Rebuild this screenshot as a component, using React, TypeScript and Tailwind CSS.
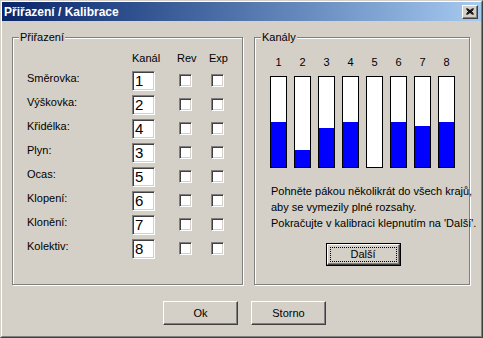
const font = { fontFamily: '"Liberation Sans", Arial, sans-serif' };

const rows = [
  { label: 'Směrovka:', ch: '1' },
  { label: 'Výškovka:', ch: '2' },
  { label: 'Křidélka:', ch: '4' },
  { label: 'Plyn:', ch: '3' },
  { label: 'Ocas:', ch: '5' },
  { label: 'Klopení:', ch: '6' },
  { label: 'Klonění:', ch: '7' },
  { label: 'Kolektiv:', ch: '8' },
];

// blue fill height in px (inner bar height is 90)
const bars = [45, 17, 39, 45, 0, 45, 41, 45];

function Checkbox() {
  return (
    <div className="w-[13px] h-[13px] bg-white border border-t-[#808080] border-l-[#808080] border-b-white border-r-white shadow-[inset_1px_1px_0_#404040,inset_-1px_-1px_0_#d4d0c8]" />
  );
}

function Button({ label, primary }: { label: string; primary?: boolean }) {
  if (primary) {
    return (
      <div className="w-[75px] h-[23px] border border-black">
        <div className="w-full h-full border border-t-white border-l-white border-b-[#404040] border-r-[#404040] shadow-[inset_-1px_-1px_0_#808080] flex items-center justify-center p-[2px]">
          <div className="w-full h-full border border-dotted border-black flex items-center justify-center text-[11px] text-black">
            {label}
          </div>
        </div>
      </div>
    );
  }
  return (
    <div className="w-[75px] h-[24px] border border-t-white border-l-white border-b-[#404040] border-r-[#404040] shadow-[inset_-1px_-1px_0_#808080] flex items-center justify-center text-[11px] text-black">
      {label}
    </div>
  );
}

export default function App() {
  return (
    <div className="w-[483px] h-[338px] bg-[#d4d0c8] border border-t-[#d4d0c8] border-l-[#d4d0c8] border-b-[#404040] border-r-[#404040] overflow-hidden" style={font}>
      <div className="w-full h-full border border-t-white border-l-white border-b-[#808080] border-r-[#808080] flex flex-col">
        {/* title bar */}
        <div className="h-[19px] flex items-center justify-between pl-[2px] pr-[3px] bg-gradient-to-r from-[#0a246a] to-[#a6caf0]">
          <span className="text-white font-bold text-[12px] leading-none">Přiřazení / Kalibrace</span>
          <div className="w-[16px] h-[14px] bg-[#d4d0c8] border border-t-white border-l-white border-b-[#404040] border-r-[#404040] shadow-[inset_-1px_-1px_0_#808080] flex items-center justify-center">
            <svg width="8" height="7" viewBox="0 0 8 7">
              <path d="M0.5 0.5 L7.5 6.5 M1.5 0.5 L7.5 5.5 M0.5 1.5 L6.5 6.5 M7.5 0.5 L0.5 6.5 M6.5 0.5 L0.5 5.5 M7.5 1.5 L1.5 6.5" stroke="black" strokeWidth="1" fill="none" />
            </svg>
          </div>
        </div>

        {/* group boxes */}
        <div className="flex pt-[16px] pl-[10px] gap-[11px]">
          {/* Přiřazení */}
          <div className="relative w-[231px] h-[248px] border border-[#808080] shadow-[1px_1px_0_#fff,inset_1px_1px_0_#fff] pl-[14px] pt-[14px]">
            <span className="absolute -top-[7px] left-[6px] px-[1px] bg-[#d4d0c8] text-[11px] leading-[13px] text-black">Přiřazení</span>
            <div className="flex text-[11px] leading-[13px] text-black">
              <div className="w-[105px]" />
              <div className="w-[45px]">Kanál</div>
              <div className="w-[32px]">Rev</div>
              <div>Exp</div>
            </div>
            <div className="mt-[6px] flex flex-col">
              {rows.map((r) => (
                <div key={r.label} className="flex items-start h-[24px]">
                  <div className="w-[105px] text-[11px] leading-[13px] pt-[1px] text-black">{r.label}</div>
                  <div className="w-[23px] h-[20px] bg-white border border-t-[#808080] border-l-[#808080] border-b-white border-r-white shadow-[inset_1px_1px_0_#404040,inset_-1px_-1px_0_#d4d0c8] pl-[2px] text-[15px] leading-[18px] text-black">
                    {r.ch}
                  </div>
                  <div className="ml-[24px] mt-[3px]"><Checkbox /></div>
                  <div className="ml-[19px] mt-[3px]"><Checkbox /></div>
                </div>
              ))}
            </div>
          </div>

          {/* Kanály */}
          <div className="relative w-[216px] h-[248px] border border-[#808080] shadow-[1px_1px_0_#fff,inset_1px_1px_0_#fff] pt-[18px]">
            <span className="absolute -top-[7px] left-[6px] px-[1px] bg-[#d4d0c8] text-[11px] leading-[13px] text-black">Kanály</span>
            <div className="flex gap-[7px] pl-[15px]">
              {bars.map((h, i) => (
                <div key={i} className="flex flex-col items-center w-[17px]">
                  <div className="text-[11px] leading-[13px] text-black">{i + 1}</div>
                  <div className="mt-[7px] w-[17px] h-[92px] bg-white border border-black flex flex-col justify-end">
                    <div className="bg-[#0000ff]" style={{ height: `${h}px` }} />
                  </div>
                </div>
              ))}
            </div>
            <p className="mt-[15px] pl-[16px] text-[11px] leading-[16px] text-black whitespace-nowrap">
              Pohněte pákou několikrát do všech krajů,
              <br />
              aby se vymezily plné rozsahy.
              <br />
              Pokračujte v kalibraci klepnutím na 'Další'.
            </p>
            <div className="mt-[12px] flex justify-center pl-[2px]">
              <Button label="Další" primary />
            </div>
          </div>
        </div>

        {/* bottom buttons */}
        <div className="flex gap-[13px] pl-[161px] mt-[16px]">
          <Button label="Ok" />
          <Button label="Storno" />
        </div>
      </div>
    </div>
  );
}
